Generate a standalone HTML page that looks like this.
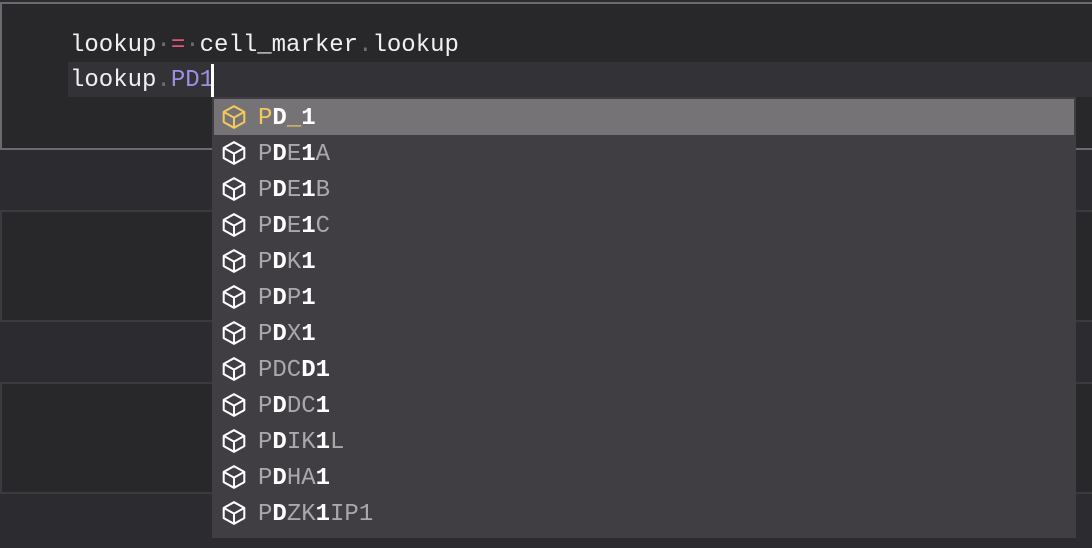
<!DOCTYPE html>
<html><head><style>
html,body{margin:0;padding:0;width:1092px;height:548px;overflow:hidden;background:#2c2b2f;font-family:"Liberation Mono",monospace;}
.cell{position:absolute;left:0;width:1100px;background:#28272a;box-sizing:border-box;}
.c1{top:2px;height:148px;border:2px solid #6b6a6e;}
.c2{top:210px;height:112px;border:2px solid #3b3a3e;}
.c3{top:382px;height:112px;border:2px solid #3b3a3e;}
.hl{position:absolute;left:68px;top:62px;width:1030px;height:35px;background:#333236;}
.code{position:absolute;left:70px;font-size:24px;color:#f0f0f2;white-space:pre;line-height:35px;}
.dim{color:#6e6d71}.pk{color:#e0577a}.pu{color:#9d8fe0}
.cur{position:absolute;left:211px;top:64px;width:3px;height:33px;background:#fff;}
.sw{position:absolute;left:212px;top:97px;width:864px;height:441px;background:#403e42;}
.row{position:absolute;left:2px;width:860px;height:36px;font-size:24px;line-height:36px;color:#a9a8ab;white-space:pre;}
.row svg{position:absolute;left:7px;top:5px;}
.row span.t{position:absolute;left:44px;top:2px;}
.sel{background:#757376;}
b{color:#fff;font-weight:bold}
.y{color:#f4c95c}
</style></head><body>
<div class="cell c1"></div>
<div class="cell c2"></div>
<div class="cell c3"></div>
<div class="hl"></div>
<div class="code" style="top:28px">lookup<span class="dim">·</span><span class="pk">=</span><span class="dim">·</span>cell_marker<span class="dim">.</span>lookup</div>
<div class="code" style="top:63px">lookup<span class="dim">.</span><span class="pu">PD1</span></div>
<div class="cur"></div>
<div class="sw">
<svg width="0" height="0" style="position:absolute"><defs><g id="cube"><path d="M12 2 L21.5 7.3 V16.7 L12 22 L2.5 16.7 V7.3 Z M2.5 7.3 L12 12.6 L21.5 7.3 M12 12.6 V22" fill="none" stroke-width="1.9" stroke-linejoin="round"/></g></defs></svg>
<div class="row sel" style="top:2px"><svg width="26" height="26" viewBox="0 0 24 24" stroke="#f4c95c"><use href="#cube"/></svg><span class="t"><span class="y">P</span><b>D</b><span class="y">_</span><b>1</b></span></div>
<div class="row" style="top:38px"><svg width="26" height="26" viewBox="0 0 24 24" stroke="#fff"><use href="#cube"/></svg><span class="t">P<b>D</b>E<b>1</b>A</span></div>
<div class="row" style="top:74px"><svg width="26" height="26" viewBox="0 0 24 24" stroke="#fff"><use href="#cube"/></svg><span class="t">P<b>D</b>E<b>1</b>B</span></div>
<div class="row" style="top:110px"><svg width="26" height="26" viewBox="0 0 24 24" stroke="#fff"><use href="#cube"/></svg><span class="t">P<b>D</b>E<b>1</b>C</span></div>
<div class="row" style="top:146px"><svg width="26" height="26" viewBox="0 0 24 24" stroke="#fff"><use href="#cube"/></svg><span class="t">P<b>D</b>K<b>1</b></span></div>
<div class="row" style="top:182px"><svg width="26" height="26" viewBox="0 0 24 24" stroke="#fff"><use href="#cube"/></svg><span class="t">P<b>D</b>P<b>1</b></span></div>
<div class="row" style="top:218px"><svg width="26" height="26" viewBox="0 0 24 24" stroke="#fff"><use href="#cube"/></svg><span class="t">P<b>D</b>X<b>1</b></span></div>
<div class="row" style="top:254px"><svg width="26" height="26" viewBox="0 0 24 24" stroke="#fff"><use href="#cube"/></svg><span class="t">PDC<b>D1</b></span></div>
<div class="row" style="top:290px"><svg width="26" height="26" viewBox="0 0 24 24" stroke="#fff"><use href="#cube"/></svg><span class="t">P<b>D</b>DC<b>1</b></span></div>
<div class="row" style="top:326px"><svg width="26" height="26" viewBox="0 0 24 24" stroke="#fff"><use href="#cube"/></svg><span class="t">P<b>D</b>IK<b>1</b>L</span></div>
<div class="row" style="top:362px"><svg width="26" height="26" viewBox="0 0 24 24" stroke="#fff"><use href="#cube"/></svg><span class="t">P<b>D</b>HA<b>1</b></span></div>
<div class="row" style="top:398px"><svg width="26" height="26" viewBox="0 0 24 24" stroke="#fff"><use href="#cube"/></svg><span class="t">P<b>D</b>ZK<b>1</b>IP1</span></div>
</div>
</body></html>
